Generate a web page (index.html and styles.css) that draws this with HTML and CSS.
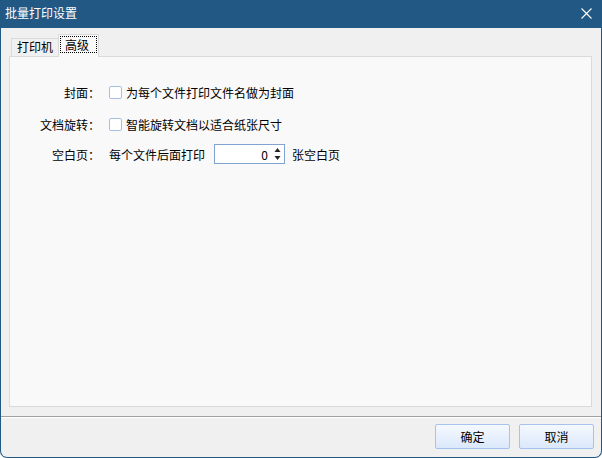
FILE: index.html
```html
<!DOCTYPE html>
<html lang="zh-CN">
<head>
    <meta charset="UTF-8">
    <title>批量打印设置</title>
    <link rel="stylesheet" href="styles.css">
</head>
<body>
    <div class="window">
        <!-- title bar -->
        <div class="titlebar">
            <span class="title">批量打印设置</span>
            <svg class="close" width="11" height="11" viewBox="0 0 11 11">
                <path d="M0.5 0.5 L10.5 10.5 M10.5 0.5 L0.5 10.5" stroke="#fff" stroke-width="1.1" fill="none"/>
            </svg>
        </div>

        <div class="client">
            <div class="tabs">
                <div class="tab">打印机</div>
                <div class="tab active"><span class="focus">高级</span></div>
            </div>

            <div class="panel">
                <div class="row">
                    <span class="label">封面：</span>
                    <span class="check"></span>
                    <span>为每个文件打印文件名做为封面</span>
                </div>
                <div class="row row-two">
                    <span class="label">文档旋转：</span>
                    <span class="check"></span>
                    <span>智能旋转文档以适合纸张尺寸</span>
                </div>
                <div class="row row-three">
                    <span class="label">空白页：</span>
                    <span>每个文件后面打印</span>
                    <div class="spin">
                        <span class="value">0</span>
                        <span class="arrows">
                            <svg width="7" height="14" viewBox="0 0 7 14">
                                <path d="M3.5 1 L6.5 5 L0.5 5 Z" fill="#222"/>
                                <path d="M0.5 9 L6.5 9 L3.5 13 Z" fill="#222"/>
                            </svg>
                        </span>
                    </div>
                    <span>张空白页</span>
                </div>
            </div>

            <div class="footer">
                <button class="btn">确定</button>
                <button class="btn">取消</button>
            </div>
        </div>
    </div>
</body>
</html>
```

FILE: styles.css
```css
body {
    margin: 0;
    font-family: "Noto Sans CJK SC", "Liberation Sans", sans-serif;
    font-size: 12px;
    color: #000;
    background: #fff;
}
.window {
    width: 602px;
    height: 458px;
    box-sizing: border-box;
    border: 1px solid #225884;
    border-top: none;
    border-radius: 0 0 7px 7px;
    background-color: #f0f0f0;
    display: flex;
    flex-direction: column;
    overflow: hidden;
}
.titlebar {
    height: 28px;
    margin: 0 -1px;
    background-color: #225884;
    color: #fff;
    display: flex;
    justify-content: space-between;
    align-items: flex-start;
    padding: 5px 10px 0 5px;
    box-sizing: border-box;
}
.title {
    font-size: 12px;
    line-height: 16px;
}
.close {
    margin-top: 3px;
}
.client {
    flex: 1;
    display: flex;
    flex-direction: column;
}
.tabs {
    display: flex;
    align-items: flex-end;
    height: 22px;
    margin: 6px 0 0 10px;
    position: relative;
    z-index: 1;
}
.tab {
    height: 18px;
    box-sizing: border-box;
    border: 1px solid #dadada;
    border-bottom: none;
    padding: 0 5px;
    line-height: 16px;
    background-color: #f0f0f0;
}
.tab.active {
    height: 23px;
    margin-bottom: -1px;
    margin-left: -1px;
    padding: 2px 2px 0 2px;
    background-color: #f9f9f9;
}
.focus {
    display: block;
    outline: 1px dotted #000;
    padding: 0 7px 0 4px;
    line-height: 15px;
}
.panel {
    height: 351px;
    box-sizing: border-box;
    margin: 0 9px 9px 8px;
    border: 1px solid #dadada;
    background-color: #f9f9f9;
    padding-top: 25px;
}
.row {
    display: flex;
    align-items: center;
    height: 20px;
}
.row-two {
    margin-top: 12px;
}
.row-three {
    margin-top: 10px;
}
.label {
    width: 90px;
    text-align: right;
    margin-right: 9px;
}
.check {
    width: 13px;
    height: 13px;
    box-sizing: border-box;
    border: 1px solid #a6c0e4;
    border-radius: 2px;
    background-color: #fff;
    margin-right: 4px;
}
.spin {
    width: 71px;
    height: 20px;
    box-sizing: border-box;
    border: 1px solid #80a3d3;
    background-color: #fff;
    display: flex;
    align-items: center;
    justify-content: flex-end;
    margin: 0 7px 0 9px;
}
.value {
    margin-right: 6px;
}
.arrows {
    display: flex;
    margin-right: 3px;
}
.footer {
    border-top: 1px solid #a0a0a0;
    box-shadow: inset 0 1px 0 #fff;
    padding: 7px 7px 8px 0;
    display: flex;
    justify-content: flex-end;
    gap: 9px;
}
.btn {
    width: 75px;
    height: 25px;
    font-family: inherit;
    font-size: 12px;
    color: #000;
    border: 1px solid #a5c3ee;
    border-radius: 2px;
    background: linear-gradient(#f5f9ff, #dbe8fb);
    padding: 0;
}
```
